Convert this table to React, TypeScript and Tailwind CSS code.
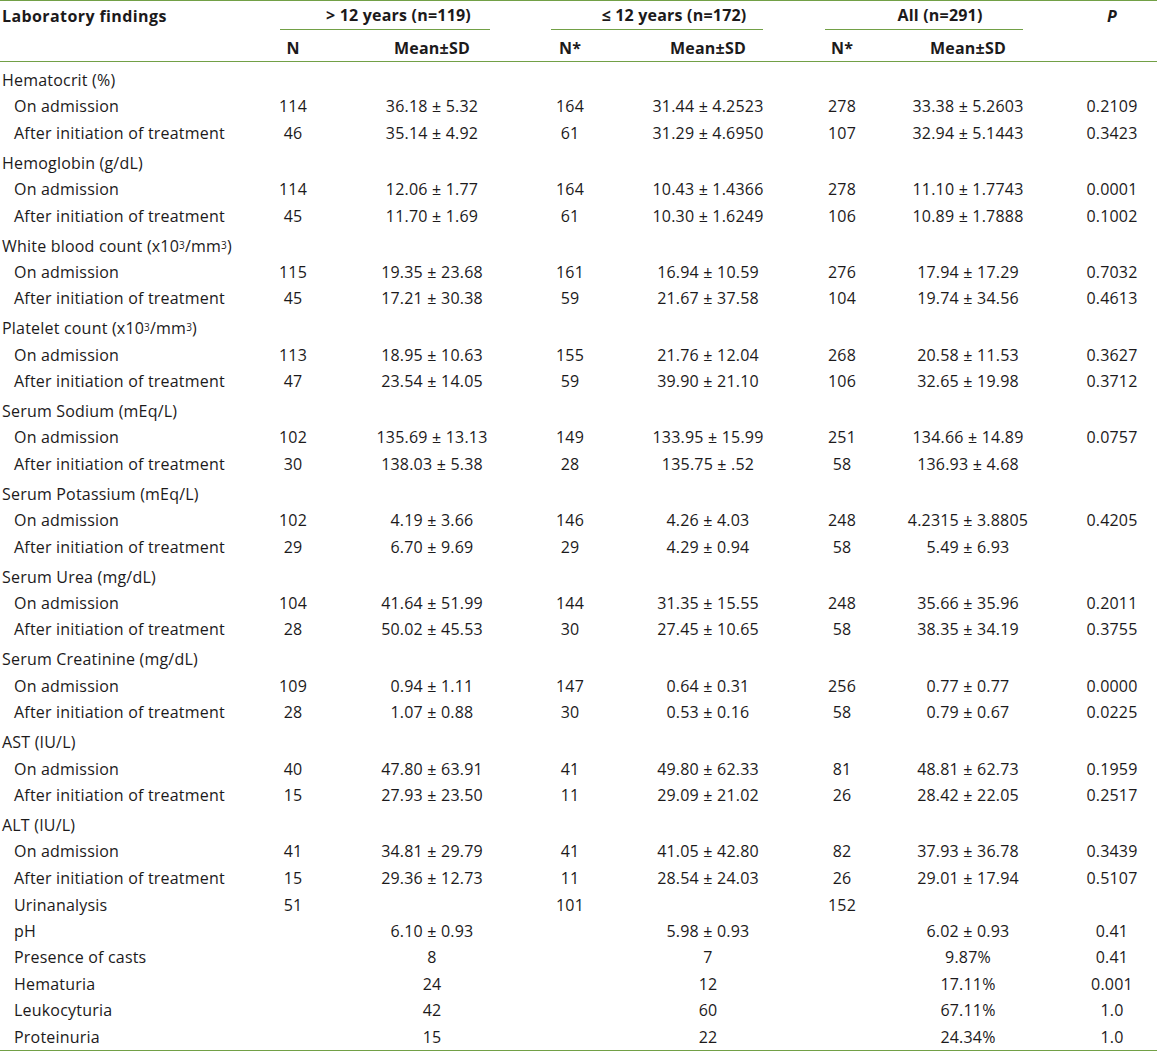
import React from "react";

type Sub = [string, string, string, string, string, string, string, string];

type Group = { title: React.ReactNode; rows: Sub[] };

const unit = (
  <>
    (x10<sup className="text-[10px] relative -top-[1px]">3</sup>/mm<sup className="text-[10px] relative -top-[1px]">3</sup>)
  </>
);

const groups: Group[] = [
  {
    title: "Hematocrit (%)",
    rows: [
      ["On admission", "114", "36.18 ± 5.32", "164", "31.44 ± 4.2523", "278", "33.38 ± 5.2603", "0.2109"],
      ["After initiation of treatment", "46", "35.14 ± 4.92", "61", "31.29 ± 4.6950", "107", "32.94 ± 5.1443", "0.3423"],
    ],
  },
  {
    title: "Hemoglobin (g/dL)",
    rows: [
      ["On admission", "114", "12.06 ± 1.77", "164", "10.43 ± 1.4366", "278", "11.10 ± 1.7743", "0.0001"],
      ["After initiation of treatment", "45", "11.70 ± 1.69", "61", "10.30 ± 1.6249", "106", "10.89 ± 1.7888", "0.1002"],
    ],
  },
  {
    title: <>White blood count {unit}</>,
    rows: [
      ["On admission", "115", "19.35 ± 23.68", "161", "16.94 ± 10.59", "276", "17.94 ± 17.29", "0.7032"],
      ["After initiation of treatment", "45", "17.21 ± 30.38", "59", "21.67 ± 37.58", "104", "19.74 ± 34.56", "0.4613"],
    ],
  },
  {
    title: <>Platelet count {unit}</>,
    rows: [
      ["On admission", "113", "18.95 ± 10.63", "155", "21.76 ± 12.04", "268", "20.58 ± 11.53", "0.3627"],
      ["After initiation of treatment", "47", "23.54 ± 14.05", "59", "39.90 ± 21.10", "106", "32.65 ± 19.98", "0.3712"],
    ],
  },
  {
    title: "Serum Sodium (mEq/L)",
    rows: [
      ["On admission", "102", "135.69 ± 13.13", "149", "133.95 ± 15.99", "251", "134.66 ± 14.89", "0.0757"],
      ["After initiation of treatment", "30", "138.03 ± 5.38", "28", "135.75 ± .52", "58", "136.93 ± 4.68", ""],
    ],
  },
  {
    title: "Serum Potassium (mEq/L)",
    rows: [
      ["On admission", "102", "4.19 ± 3.66", "146", "4.26 ± 4.03", "248", "4.2315 ± 3.8805", "0.4205"],
      ["After initiation of treatment", "29", "6.70 ± 9.69", "29", "4.29 ± 0.94", "58", "5.49 ± 6.93", ""],
    ],
  },
  {
    title: "Serum Urea (mg/dL)",
    rows: [
      ["On admission", "104", "41.64 ± 51.99", "144", "31.35 ± 15.55", "248", "35.66 ± 35.96", "0.2011"],
      ["After initiation of treatment", "28", "50.02 ± 45.53", "30", "27.45 ± 10.65", "58", "38.35 ± 34.19", "0.3755"],
    ],
  },
  {
    title: "Serum Creatinine (mg/dL)",
    rows: [
      ["On admission", "109", "0.94 ± 1.11", "147", "0.64 ± 0.31", "256", "0.77 ± 0.77", "0.0000"],
      ["After initiation of treatment", "28", "1.07 ± 0.88", "30", "0.53 ± 0.16", "58", "0.79 ± 0.67", "0.0225"],
    ],
  },
  {
    title: "AST (IU/L)",
    rows: [
      ["On admission", "40", "47.80 ± 63.91", "41", "49.80 ± 62.33", "81", "48.81 ± 62.73", "0.1959"],
      ["After initiation of treatment", "15", "27.93 ± 23.50", "11", "29.09 ± 21.02", "26", "28.42 ± 22.05", "0.2517"],
    ],
  },
  {
    title: "ALT (IU/L)",
    rows: [
      ["On admission", "41", "34.81 ± 29.79", "41", "41.05 ± 42.80", "82", "37.93 ± 36.78", "0.3439"],
      ["After initiation of treatment", "15", "29.36 ± 12.73", "11", "28.54 ± 24.03", "26", "29.01 ± 17.94", "0.5107"],
    ],
  },
];

const urine: Sub[] = [
  ["Urinanalysis", "51", "", "101", "", "152", "", ""],
  ["pH", "", "6.10 ± 0.93", "", "5.98 ± 0.93", "", "6.02 ± 0.93", "0.41"],
  ["Presence of casts", "", "8", "", "7", "", "9.87%", "0.41"],
  ["Hematuria", "", "24", "", "12", "", "17.11%", "0.001"],
  ["Leukocyturia", "", "42", "", "60", "", "67.11%", "1.0"],
  ["Proteinuria", "", "15", "", "22", "", "24.34%", "1.0"],
];

const cols = "grid grid-cols-[270px_46px_232px_44px_232px_36px_216px_1fr]";

function DataRow({ r }: { r: Sub }) {
  return (
    <div className={`${cols} h-[26.4px] items-center`}>
      <div className="pl-[14px] whitespace-nowrap">{r[0]}</div>
      {r.slice(1, 7).map((v, i) => (
        <div key={i} className="text-center whitespace-nowrap">
          {v}
        </div>
      ))}
      <div className="text-center pr-[9px]">{r[7]}</div>
    </div>
  );
}

export default function App() {
  return (
    <div className="w-[1157px] bg-white text-[#1c1a1b] font-['Open_Sans',sans-serif] text-[16px] tracking-[0.2px] leading-none">
      {/* header */}
      <div className="border-t border-[#72a046]">
        <div className={`${cols} h-[29px] items-center font-bold`}>
          <div className="pl-[2px] tracking-[0.4px]">Laboratory findings</div>
          <div className="col-span-2 h-full flex flex-col ml-[10px] mr-[58px]">
            <div className="flex-1 flex items-center justify-center pl-[27px] whitespace-nowrap">&gt; 12 years (n=119)</div>
            <div className="h-px bg-[#72a046]" />
          </div>
          <div className="col-span-2 h-full flex flex-col ml-[3px] mr-[61px]">
            <div className="flex-1 flex items-center justify-center pl-[34px] whitespace-nowrap">≤ 12 years (n=172)</div>
            <div className="h-px bg-[#72a046]" />
          </div>
          <div className="col-span-2 h-full flex flex-col ml-[1px] mr-[53px]">
            <div className="flex-1 flex items-center justify-center pl-[32px] whitespace-nowrap">All (n=291)</div>
            <div className="h-px bg-[#72a046]" />
          </div>
          <div className="text-center pr-[9px] italic">P</div>
        </div>
        <div className={`${cols} h-[32px] pt-[4px] items-center font-bold border-b border-[#72a046]`}>
          <div />
          <div className="text-center">N</div>
          <div className="text-center">Mean±SD</div>
          <div className="text-center">N*</div>
          <div className="text-center">Mean±SD</div>
          <div className="text-center">N*</div>
          <div className="text-center">Mean±SD</div>
          <div />
        </div>
      </div>

      {/* body */}
      <div className="border-b border-[#72a046]">
        {groups.map((g, gi) => (
          <div key={gi} className={gi === 0 ? "pt-[4.8px]" : "pt-[3.6px]"}>
            <div className="h-[26.4px] flex items-center pl-[2px] whitespace-nowrap">{g.title}</div>
            {g.rows.map((r, ri) => (
              <DataRow key={ri} r={r} />
            ))}
          </div>
        ))}
        <div className="pt-[0.6px]">
          {urine.map((r, ri) => (
            <DataRow key={ri} r={r} />
          ))}
        </div>
      </div>
    </div>
  );
}
